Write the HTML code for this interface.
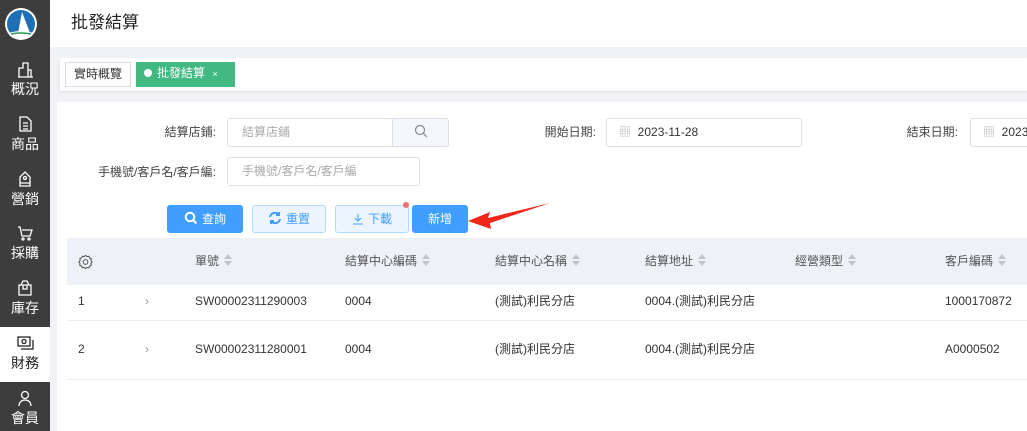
<!DOCTYPE html>
<html><head><meta charset="utf-8"><style>
*{margin:0;padding:0;box-sizing:border-box}
body{width:1027px;height:431px;overflow:hidden;background:#f0f2f5;font-family:"Liberation Sans","Noto Sans CJK TC",sans-serif;font-size:12px;color:#333;position:relative;line-height:16px}
.side{position:absolute;left:0;top:0;width:50px;height:431px;background:#3d3d3d}
.si{position:absolute;left:0;width:50px;text-align:center;color:#fff;font-size:14px;line-height:18px}
.si svg{display:block;margin:0 auto 2px}
.si.act{background:#fff;color:#222}
.hdr{position:absolute;left:50px;top:0;right:0;height:47px;background:#fff}
.hdr h1{position:absolute;left:21px;top:12px;font-size:17px;font-weight:normal;color:#222;line-height:22px}
.tabs{position:absolute;left:60px;top:58px;right:0;height:33px;background:#fff;box-shadow:0 1px 2px rgba(0,0,0,.1)}
.tab{position:absolute;top:4px;height:25px;line-height:23px;font-size:12px;padding:0 8px}
.card{position:absolute;left:57px;top:102px;right:0;bottom:0;background:#fff}
.lbl{position:absolute;font-size:12px;color:#444;text-align:right}
.inp{position:absolute;height:29px;border:1px solid #dcdfe6;border-radius:3px;color:#aaa;font-size:12px;line-height:27px;padding-left:14px;background:#fff}
.btn{position:absolute;top:205px;height:28px;border-radius:3px;font-size:12px;line-height:26px;text-align:center}
.btn svg{vertical-align:-2px;margin-right:4px}
.th{position:absolute;top:238px;left:67px;right:0;height:47px;background:#eef1f6}
.c{position:absolute;font-size:12px;color:#333;line-height:16px;height:16px;white-space:nowrap}
.h{color:#555}
.srt{display:inline-block;vertical-align:-1px;margin-left:5px;width:9px;height:12px;position:relative}
.srt:before{content:"";position:absolute;left:0;top:0;border:4.5px solid transparent;border-bottom:5px solid #c0c4cc;border-top:0}
.srt:after{content:"";position:absolute;left:0;bottom:0;border:4.5px solid transparent;border-top:5px solid #c0c4cc;border-bottom:0}
.line{position:absolute;left:67px;right:0;height:1px;background:#ebeef5}
</style></head><body>
<div class="side">
 <svg style="position:absolute;left:4px;top:7px" width="34" height="34" viewBox="0 0 34 34"><circle cx="17" cy="17" r="16" fill="#fff"/><circle cx="17" cy="17" r="14" fill="#1f6fb4"/><path d="M18 5 L14 26 L26 26 Z" fill="#fff"/><path d="M5 26 Q17 22 29 26 L27 30 Q17 33 7 30 Z" fill="#fff"/><path d="M7 27 Q17 25 27 27" stroke="#2a9a5a" stroke-width="1.5" fill="none"/></svg>
 <div class="si" style="top:60px"><svg width="18" height="18" viewBox="0 0 18 18" fill="none" stroke="#fff" stroke-width="1.3"><path d="M3 17V8h4V3h5v14M12 10h3v7M2 17h15"/></svg>概況</div>
 <div class="si" style="top:115px"><svg width="18" height="18" viewBox="0 0 18 18" fill="none" stroke="#fff" stroke-width="1.3"><path d="M4 2h7l4 4v10H4zM7 8h5M7 11h5M7 14h5"/></svg>商品</div>
 <div class="si" style="top:170px"><svg width="18" height="18" viewBox="0 0 18 18" fill="none" stroke="#fff" stroke-width="1.3"><path d="M4 16V7l5-5 5 5v9zM4 13h10"/><circle cx="9" cy="8" r="1.5"/></svg>營銷</div>
 <div class="si" style="top:224px"><svg width="18" height="18" viewBox="0 0 18 18" fill="none" stroke="#fff" stroke-width="1.3"><path d="M2 3h2l2 9h8l2-6H6"/><circle cx="7" cy="15" r="1"/><circle cx="13" cy="15" r="1"/></svg>採購</div>
 <div class="si" style="top:279px"><svg width="18" height="18" viewBox="0 0 18 18" fill="none" stroke="#fff" stroke-width="1.3"><path d="M3 6h12v10H3zM5 6l2-4h4l2 4M7 6v4h4V6"/></svg>庫存</div>
 <div class="si act" style="top:327px;height:55px;padding-top:7px"><svg width="18" height="18" viewBox="0 0 18 18" fill="none" stroke="#222" stroke-width="1.3"><path d="M2 3h12v9H2zM5 15h12V6"/><circle cx="8" cy="7.5" r="2"/></svg>財務</div>
 <div class="si" style="top:389px"><svg width="18" height="18" viewBox="0 0 18 18" fill="none" stroke="#fff" stroke-width="1.3"><circle cx="9" cy="6" r="3.5"/><path d="M3 17c0-4 3-6 6-6s6 2 6 6"/></svg>會員</div>
</div>
<div class="hdr"><h1>批發結算</h1></div>
<div class="tabs">
 <div class="tab" style="left:5px;border:1px solid #d8dce5;color:#333">實時概覽</div>
 <div class="tab" style="left:76px;background:#42b983;color:#fff;width:99px"><span style="display:inline-block;width:8px;height:8px;border-radius:50%;background:#fff;margin-right:5px"></span>批發結算 <span style="font-size:9px;margin-left:4px">×</span></div>
</div>
<div class="card"></div>
<div class="lbl" style="left:100px;top:124px;width:116px">結算店鋪:</div>
<div class="inp" style="left:227px;top:118px;width:166px">結算店鋪</div>
<div class="inp" style="left:392px;top:118px;width:57px;border-radius:0 3px 3px 0;background:#f5f7fa;padding:0;text-align:center"><svg width="14" height="14" viewBox="0 0 14 14" style="vertical-align:-2px" fill="none" stroke="#888" stroke-width="1.2"><circle cx="6" cy="6" r="4.5"/><path d="M9.5 9.5L13 13"/></svg></div>
<div class="lbl" style="left:480px;top:124px;width:116px">開始日期:</div>
<div class="inp" style="left:606px;top:118px;width:196px;color:#333;padding-left:12px"><span style="color:#bbb">▦</span>&nbsp; 2023-11-28</div>
<div class="lbl" style="left:842px;top:124px;width:116px">結束日期:</div>
<div class="inp" style="left:970px;top:118px;width:80px;color:#333;padding-left:12px"><span style="color:#bbb">▦</span>&nbsp; 2023</div>
<div class="lbl" style="left:60px;top:164px;width:156px">手機號/客戶名/客戶編:</div>
<div class="inp" style="left:227px;top:157px;width:193px">手機號/客戶名/客戶編</div>
<div class="btn" style="left:167px;width:76px;background:#409eff;color:#fff;line-height:28px"><svg width="14" height="14" viewBox="0 0 14 14" fill="none" stroke="#fff" stroke-width="2"><circle cx="6" cy="6" r="4.3"/><path d="M9 9l3.5 3.5"/></svg>查詢</div>
<div class="btn" style="left:252px;width:74px;background:#ecf5ff;border:1px solid #b3d8ff;color:#409eff"><svg width="14" height="14" viewBox="0 0 14 14" fill="none" stroke="#409eff" stroke-width="2"><path d="M2 6a5 5 0 0 1 9-2M12 8a5 5 0 0 1-9 2"/><path d="M11 1v3H8M3 13v-3h3"/></svg>重置</div>
<div class="btn" style="left:335px;width:74px;background:#ecf5ff;border:1px solid #b3d8ff;color:#409eff"><svg width="12" height="12" viewBox="0 0 12 12" fill="none" stroke="#409eff" stroke-width="1"><path d="M6 1v7M3 5l3 3 3-3M1 11h10"/></svg>下載</div>
<div style="position:absolute;left:403px;top:202px;width:6px;height:6px;border-radius:50%;background:#f56c6c"></div>
<div class="btn" style="left:412px;width:56px;background:#409eff;color:#fff;line-height:28px">新增</div>
<svg style="position:absolute;left:460px;top:198px" width="95" height="36"><path d="M90 5 L28 20 L30 14 L8 23 L31 31 L30 25 Z" fill="#f0261b"/></svg>
<div class="th"></div>
<svg style="position:absolute;left:78px;top:254px" width="15" height="15" viewBox="0 0 16 16" fill="none" stroke="#555" stroke-width="1.1"><path d="M8 1.5l1.6 1.3 2-.4.7 1.9 1.9.7-.4 2L15 8.6l-1.3 1.6.4 2-1.9.7-.7 1.9-2-.4L8 15.5l-1.6-1.3-2 .4-.7-1.9-1.9-.7.4-2L1 8.6l1.3-1.6-.4-2 1.9-.7.7-1.9 2 .4z"/><circle cx="8" cy="8.5" r="2.5"/></svg>
<div class="c h" style="left:195px;top:253px">單號<span class="srt"></span></div>
<div class="c h" style="left:345px;top:253px">結算中心編碼<span class="srt"></span></div>
<div class="c h" style="left:495px;top:253px">結算中心名稱<span class="srt"></span></div>
<div class="c h" style="left:645px;top:253px">結算地址<span class="srt"></span></div>
<div class="c h" style="left:795px;top:253px">經營類型<span class="srt"></span></div>
<div class="c h" style="left:945px;top:253px">客戶編碼<span class="srt"></span></div>
<div class="c" style="left:78px;top:293px">1</div><div class="c" style="left:145px;top:293px;color:#999">›</div>
<div class="c" style="left:195px;top:293px">SW00002311290003</div><div class="c" style="left:345px;top:293px">0004</div>
<div class="c" style="left:495px;top:293px">(測試)利民分店</div><div class="c" style="left:645px;top:293px">0004.(測試)利民分店</div>
<div class="c" style="left:945px;top:293px">1000170872</div>
<div class="line" style="top:320px"></div>
<div class="c" style="left:78px;top:341px">2</div><div class="c" style="left:145px;top:341px;color:#999">›</div>
<div class="c" style="left:195px;top:341px">SW00002311280001</div><div class="c" style="left:345px;top:341px">0004</div>
<div class="c" style="left:495px;top:341px">(測試)利民分店</div><div class="c" style="left:645px;top:341px">0004.(測試)利民分店</div>
<div class="c" style="left:945px;top:341px">A0000502</div>
<div class="line" style="top:379px"></div>
</body></html>
